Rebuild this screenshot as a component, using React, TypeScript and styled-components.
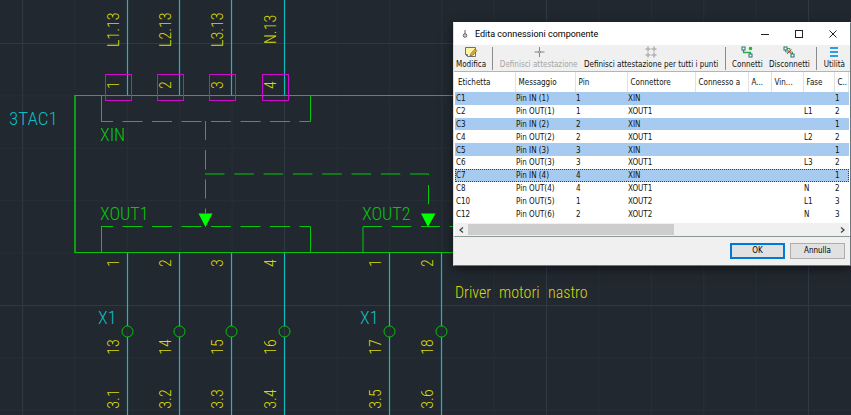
import React from "react";
import styled, { createGlobalStyle, css } from "styled-components";

const GlobalStyle = createGlobalStyle`
  * { box-sizing: border-box; }
  html, body { margin: 0; height: 100%; background: #21282f; overflow: hidden; }
`;

const Desktop = styled.main`
  position: relative;
  min-height: 100vh;
  background: #21282f;
`;

const Drawing = styled.svg`
  display: block;
  width: 100%;
  height: 100vh;
  text { font-family: "Roboto Condensed", "Open Sans Condensed", "Roboto", sans-serif; font-weight: 300; }
`;

const Label = styled.text<{ $size: number; $color: string }>`
  font-size: ${(p) => p.$size}px;
  fill: ${(p) => p.$color};
`;

const GREEN = "#08c40c";
const CYAN = "#10bcc0";
const YELLOW = "#d8d80c";
const MAGENTA = "#d008d0";

const inputs = [
  { x: 127, pin: "1", wire: "L1.13" },
  { x: 179, pin: "2", wire: "L2.13" },
  { x: 231, pin: "3", wire: "L3.13" },
  { x: 284, pin: "4", wire: "N.13" },
];

const outputs = [
  { x: 127, pin: "1", terminal: "13", wire: "3.1" },
  { x: 179, pin: "2", terminal: "14", wire: "3.2" },
  { x: 231, pin: "3", terminal: "15", wire: "3.3" },
  { x: 284, pin: "4", terminal: "16", wire: "3.4" },
  { x: 389, pin: "1", terminal: "17", wire: "3.5" },
  { x: 441, pin: "2", terminal: "18", wire: "3.6" },
];

type VProps = { x: number; y: number; children: string; anchor?: "start" | "middle" | "end" };

const VerticalLabel = ({ x, y, children, anchor = "middle" }: VProps) => (
  <Label $size={16} $color={YELLOW} textAnchor={anchor} transform={`translate(${x} ${y}) rotate(-90)`}>
    {children}
  </Label>
);

const Schematic = () => (
  <Drawing aria-label="Schema 3TAC1">
    <defs>
      <pattern id="minor" x="22" y="43" width="52.4" height="52.4" patternUnits="userSpaceOnUse">
        <path d="M0.5 0V52.4M0 0.5H52.4" stroke="#262e36" fill="none" />
      </pattern>
      <pattern id="major" x="22" y="43" width="262" height="262" patternUnits="userSpaceOnUse">
        <path d="M0.5 0V262M0 0.5H262" stroke="#303843" fill="none" />
      </pattern>
    </defs>
    <rect width="100%" height="100%" fill="url(#minor)" />
    <rect width="100%" height="100%" fill="url(#major)" />

    <g fill="none" stroke={GREEN}>
      <path d="M900 95.5H75M900 252.5H75" />
      <path d="M75 95V253" strokeWidth="1.5" />
      <path d="M101.5 95V121.5M310.5 95V121.5M101.5 253V226.5M310.5 253V226.5M363 253V226.5" />
      <path d="M101 121.5H310.5M101 226.5H310.5" strokeDasharray="12 9.5 20 9.5 20 9.5 20 9.5 20 9.5 20 9.5 20 9.5 12" />
      <path d="M363 226.5H453" strokeDasharray="19 9.5 20 9.5" />
      <path d="M205.5 121V213" strokeDasharray="19 10 19.5 10" />
      <path d="M205 174H428.5V213" strokeDasharray="19.5 9.8" />
    </g>
    <path d="M198.5 213.5H212.5L205.5 227ZM421 213.5H435.5L428 227Z" fill="#00ff00" />

    {inputs.map((w) => (
      <g key={w.wire}>
        <path d={`M${w.x + 0.5} 0V95`} stroke={CYAN} strokeWidth="1.2" />
        <rect x={w.x - 21.5} y="74.5" width="26" height="26" fill="none" stroke={MAGENTA} />
        <VerticalLabel x={w.x - 8} y={w.wire === "N.13" ? 44 : 47} anchor="start">{w.wire}</VerticalLabel>
        <VerticalLabel x={w.x - 8} y={85}>{w.pin}</VerticalLabel>
      </g>
    ))}

    {outputs.map((w) => (
      <g key={w.wire}>
        <path d={`M${w.x + 0.5} 253V326M${w.x + 0.5} 337V500`} stroke={CYAN} strokeWidth="1.2" />
        <circle cx={w.x + 0.5} cy="331.5" r="5.5" fill="none" stroke={GREEN} />
        <VerticalLabel x={w.x - 8} y={263}>{w.pin}</VerticalLabel>
        <VerticalLabel x={w.x - 8} y={347}>{w.terminal}</VerticalLabel>
        <VerticalLabel x={w.x - 8} y={399}>{w.wire}</VerticalLabel>
      </g>
    ))}

    <Label $size={19} $color={CYAN} x="9" y="125">3TAC1</Label>
    <Label $size={18} $color={CYAN} x="98" y="324">X1</Label>
    <Label $size={18} $color={CYAN} x="360" y="324">X1</Label>
    <Label $size={18} $color={GREEN} x="100" y="141">XIN</Label>
    <Label $size={18} $color={GREEN} x="100" y="220">XOUT1</Label>
    <Label $size={18} $color={GREEN} x="362" y="220">XOUT2</Label>
    <Label $size={16} $color={YELLOW} y="298">
      <tspan x="455">Driver </tspan>
      <tspan x="499">motori </tspan>
      <tspan x="548">nastro</tspan>
    </Label>
  </Drawing>
);

const Dialog = styled.section`
  position: absolute;
  top: 22px;
  left: 453px;
  right: 0;
  display: flex;
  flex-direction: column;
  border: 1px solid #6b7678;
  border-top-color: #fff;
  border-left-color: #d8dcdc;
  background: #f0f0f0;
  box-shadow: 0 3px 10px rgba(0, 0, 0, 0.5);
  font: 8px/12px "DejaVu Sans Condensed", "Noto Sans", sans-serif;
  color: #111;
`;

const TitleBar = styled.header`
  display: flex;
  align-items: center;
  height: 22px;
  padding-left: 8px;
  background: #fff;
`;

const Title = styled.h1`
  flex: 1;
  margin: 0 0 0 7px;
  font: 400 9px/14px Roboto, sans-serif;
  color: #000;
`;

const WindowButton = styled.button`
  display: grid;
  place-items: center;
  width: 34px;
  height: 22px;
  padding: 0;
  border: 0;
  background: none;
`;

const Toolbar = styled.div`
  display: flex;
  align-items: center;
  justify-content: space-between;
  height: 27px;
  padding: 0 5px 0 2px;
  border-bottom: 1px solid #b4b4b4;
`;

const Tool = styled.button`
  display: flex;
  flex-direction: column;
  align-items: center;
  gap: 1px;
  padding: 0;
  border: 0;
  background: none;
  font: inherit;
  line-height: 12px;
  white-space: nowrap;
  color: #111;
  &:disabled { color: #a5a5a5; }
  svg { display: block; }
`;

const Divider = styled.span`
  width: 1px;
  height: 23px;
  background: #8c8c8c;
`;

const Grid = styled.table`
  width: 100%;
  height: 148px;
  table-layout: fixed;
  border-collapse: collapse;
  background: #fff;
`;

const HeadCell = styled.th`
  height: 20px;
  padding: 1px 0 0 3px;
  border-right: 1px solid #e2e2e2;
  font-weight: 400;
  text-align: left;
  white-space: nowrap;
  overflow: hidden;
`;

const Row = styled.tr<{ $selected: boolean; $focused: boolean }>`
  background: ${(p) => (p.$selected ? "#a6caf0" : "#fff")};
  ${(p) => p.$focused && css`outline: 1px dotted #33414f; outline-offset: -1px;`}
`;

const Cell = styled.td`
  padding: 1px 0 0 1px;
  line-height: 11px;
  white-space: nowrap;
`;

const GridPanel = styled.div`
  padding: 0 1px;
  background: #fff;
  border-bottom: 1px solid #8f9699;
`;

const ScrollBar = styled.div`
  display: flex;
  align-items: center;
  height: 13px;
  margin-top: 3px;
  background: #f0f0f0;
`;

const ScrollArrow = styled.button`
  display: grid;
  place-items: center;
  width: 13px;
  height: 12px;
  padding: 0;
  border: 0;
  background: none;
`;

const Track = styled.div`
  flex: 1;
  height: 11px;
`;

const Thumb = styled.div`
  width: 56%;
  height: 11px;
  background: #cdcdcd;
`;

const Footer = styled.footer`
  display: flex;
  justify-content: flex-end;
  gap: 5px;
  padding: 6px 5px;
`;

const DialogButton = styled.button<{ $primary?: boolean }>`
  width: 55px;
  height: 16px;
  padding: 0;
  border: ${(p) => (p.$primary ? "2px solid #0078d7" : "1px solid #adadad")};
  background: #e1e1e1;
  font: inherit;
  color: #000;
`;

const columns = [
  { name: "Etichetta", width: 60 },
  { name: "Messaggio", width: 60 },
  { name: "Pin", width: 52 },
  { name: "Connettore", width: 68 },
  { name: "Connesso a", width: 53 },
  { name: "A...", width: 23 },
  { name: "Vin...", width: 32 },
  { name: "Fase", width: 31 },
  { name: "C..", width: 0 },
];

const rows = [
  ["C1", "Pin IN (1)", "1", "XIN", "", "1"],
  ["C2", "Pin OUT(1)", "1", "XOUT1", "L1", "2"],
  ["C3", "Pin IN (2)", "2", "XIN", "", "1"],
  ["C4", "Pin OUT(2)", "2", "XOUT1", "L2", "2"],
  ["C5", "Pin IN (3)", "3", "XIN", "", "1"],
  ["C6", "Pin OUT(3)", "3", "XOUT1", "L3", "2"],
  ["C7", "Pin IN (4)", "4", "XIN", "", "1"],
  ["C8", "Pin OUT(4)", "4", "XOUT1", "N", "2"],
  ["C10", "Pin OUT(5)", "1", "XOUT2", "L1", "3"],
  ["C12", "Pin OUT(6)", "2", "XOUT2", "N", "3"],
];

const EditIcon = () => (
  <svg width="14" height="12" viewBox="0 0 14 12" fill="none">
    <path d="M1.5 1.5H11.5V10.5H3.5L1.5 8.5Z" fill="#fdf6a6" stroke="#66747a" />
    <path d="M1.5 8.5H3.5V10.5" stroke="#66747a" />
    <path d="M6 10L7 7.5L11 3L13 4.7L9 9Z" fill="#eba72f" stroke="#6a5a35" strokeWidth=".6" />
  </svg>
);

const TargetIcon = () => (
  <svg width="12" height="12" viewBox="0 0 12 12" stroke="#858585" fill="none">
    <path d="M6.5 1V11M1.5 6H11.5" />
    <circle cx="6.5" cy="6" r="1" fill="#f0f0f0" />
  </svg>
);

const TargetsIcon = () => (
  <svg width="12" height="12" viewBox="0 0 12 12" stroke="#777" fill="none">
    <path d="M3 0.5V5.5M0.5 3H5.5M9 0.5V5.5M6.5 3H11.5M3 6.5V11.5M0.5 9H5.5M9 6.5V11.5M6.5 9H11.5" strokeWidth=".8" />
    <path d="M3 2.5V3.5M9 2.5V3.5M3 8.5V9.5M9 8.5V9.5" stroke="#f0f0f0" />
  </svg>
);

const ConnectIcon = () => (
  <svg width="12" height="12" viewBox="0 0 12 12" fill="none">
    <path d="M2.5 4V6.5H9.5V8" stroke="#2fa84a" strokeWidth="1.3" />
    <rect x="1" y="1" width="3" height="3" fill="#fff" stroke="#276b78" />
    <rect x="8" y="8" width="3" height="3" fill="#fff" stroke="#276b78" />
    <circle cx="9.5" cy="2.5" r="1.7" fill="#27b637" />
    <path d="M8 1L11 4M11 1L8 4" stroke="#27b637" strokeWidth=".8" />
  </svg>
);

const DisconnectIcon = () => (
  <svg width="12" height="12" viewBox="0 0 12 12" fill="none">
    <path d="M4 2.5H7V5.5M2.5 4V6H9.5V8" stroke="#2fa84a" />
    <rect x="1" y="1" width="3" height="3" fill="#fff" stroke="#276b78" />
    <rect x="8" y="8" width="3" height="3" fill="#fff" stroke="#276b78" />
    <path d="M4 3.5L8.5 8M8.5 3.5L4 8" stroke="#a3473d" />
  </svg>
);

const MenuIcon = () => (
  <svg width="10" height="12" viewBox="0 0 10 12">
    <path d="M1 2H9M1 6H9M1 10H9" stroke="#2d9fe0" strokeWidth="2" />
  </svg>
);

const App = () => (
  <>
    <GlobalStyle />
    <Desktop>
      <Schematic />
      <Dialog role="dialog" aria-labelledby="dialog-title">
        <TitleBar>
          <svg width="6" height="10" viewBox="0 0 6 10" fill="none" stroke="#666">
            <circle cx="3" cy="6.5" r="1.8" fill="#ccc" />
            <path d="M3 1V5" />
          </svg>
          <Title id="dialog-title">Edita connessioni componente</Title>
          <WindowButton aria-label="Riduci a icona">
            <svg width="8" height="8"><path d="M0 4.5H8" stroke="#222" /></svg>
          </WindowButton>
          <WindowButton aria-label="Ingrandisci">
            <svg width="8" height="8"><rect x=".5" y=".5" width="7" height="7" fill="none" stroke="#222" /></svg>
          </WindowButton>
          <WindowButton aria-label="Chiudi">
            <svg width="8" height="8"><path d="M.5 .5L7.5 7.5M7.5 .5L.5 7.5" stroke="#222" /></svg>
          </WindowButton>
        </TitleBar>
        <Toolbar role="toolbar">
          <Tool><EditIcon />Modifica</Tool>
          <Divider />
          <Tool disabled><TargetIcon />Definisci attestazione</Tool>
          <Tool><TargetsIcon />Definisci attestazione per tutti i punti</Tool>
          <Divider />
          <Tool><ConnectIcon />Connetti</Tool>
          <Tool><DisconnectIcon />Disconnetti</Tool>
          <Divider />
          <Tool><MenuIcon />Utilità</Tool>
        </Toolbar>
        <GridPanel>
          <Grid>
            <colgroup>
              {columns.map((c) => <col key={c.name} width={c.width || undefined} />)}
            </colgroup>
            <thead>
              <tr>{columns.map((c) => <HeadCell key={c.name} scope="col">{c.name}</HeadCell>)}</tr>
            </thead>
            <tbody>
              {rows.map(([tag, message, pin, connector, phase, c]) => (
                <Row key={tag} $selected={message.includes("IN (")} $focused={tag === "C7"}>
                  <Cell>{tag}</Cell>
                  <Cell>{message}</Cell>
                  <Cell>{pin}</Cell>
                  <Cell>{connector}</Cell>
                  <Cell />
                  <Cell />
                  <Cell />
                  <Cell>{phase}</Cell>
                  <Cell>{c}</Cell>
                </Row>
              ))}
            </tbody>
          </Grid>
          <ScrollBar>
            <ScrollArrow aria-label="Scorri a sinistra">
              <svg width="5" height="6" fill="none" stroke="#444" strokeWidth="1.3"><path d="M4 .5L1 3L4 5.5" /></svg>
            </ScrollArrow>
            <Track><Thumb /></Track>
            <ScrollArrow aria-label="Scorri a destra">
              <svg width="5" height="6" fill="none" stroke="#444" strokeWidth="1.3"><path d="M1 .5L4 3L1 5.5" /></svg>
            </ScrollArrow>
          </ScrollBar>
        </GridPanel>
        <Footer>
          <DialogButton $primary>OK</DialogButton>
          <DialogButton>Annulla</DialogButton>
        </Footer>
      </Dialog>
    </Desktop>
  </>
);

export default App;
